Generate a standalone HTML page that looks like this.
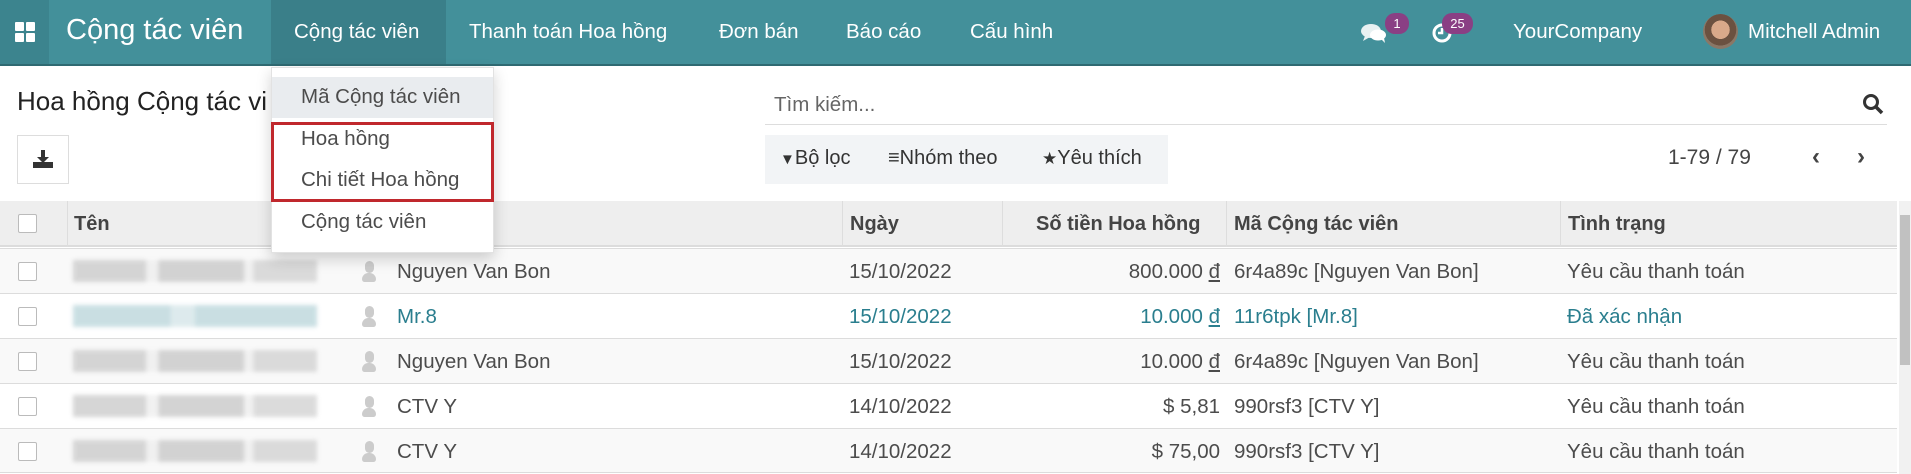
<!DOCTYPE html>
<html><head><meta charset="utf-8"><style>
*{margin:0;padding:0;box-sizing:border-box}
body{width:1911px;height:474px;overflow:hidden;background:#fff;font-family:"Liberation Sans",sans-serif;color:#4c4c4c;position:relative}
.a{position:absolute;white-space:nowrap}
.nav{position:absolute;left:0;top:0;width:1911px;height:66px;background:#43909a;border-bottom:2px solid #2f6a72}
.nv{color:#fff;font-size:20.5px;top:20px}
.badge{position:absolute;background:#8a3f84;color:#fff;font-size:13px;border-radius:10px;text-align:center;height:21px;line-height:21px}
.row{position:absolute;left:0;width:1897px;height:45px;border-top:1px solid #dcdcdc;font-size:20.5px;color:#4c4c4c}
.row span{position:absolute;top:11px;white-space:nowrap}
.cb{position:absolute;left:18px;top:13px;width:19px;height:19px;border:1px solid #bbb;background:#fff;border-radius:2px}
.blur{position:absolute;left:73px;top:11px;width:244px;height:22px;background:linear-gradient(90deg,#ccc 0 30%,#eee 30% 35%,#c9c9c9 35% 70%,#eee 70% 74%,#d3d3d3 74%);filter:blur(2px);opacity:.8}
.av{position:absolute;left:362px;top:12px;width:14px;height:22px}
.av:before{content:"";position:absolute;left:3px;top:0;width:9px;height:12px;border-radius:5px;background:#ccc}
.av:after{content:"";position:absolute;left:0;top:12px;width:14px;height:9px;border-radius:7px 7px 3px 3px;background:#ccc}
.hd{position:absolute;top:213px;font-size:20px;font-weight:bold;color:#444}
.col{position:absolute;top:201px;width:1px;height:46px;background:#ddd}
.teal span{color:#2a7e8e}
.dd{position:absolute;font-size:20.5px;color:#4c4c4c;left:301px}
</style></head><body>
<div class="nav"></div>
<div class="a" style="left:0;top:0;width:49px;height:64px;background:#3c848e"></div>
<div class="a" style="left:15px;top:22px;width:9px;height:9px;background:#fff;border-radius:1px"></div>
<div class="a" style="left:26px;top:22px;width:9px;height:9px;background:#fff;border-radius:1px"></div>
<div class="a" style="left:15px;top:33px;width:9px;height:9px;background:#fff;border-radius:1px"></div>
<div class="a" style="left:26px;top:33px;width:9px;height:9px;background:#fff;border-radius:1px"></div>
<div class="a" style="left:66px;top:14px;color:#fff;font-size:29px">Cộng tác viên</div>
<div class="a" style="left:271px;top:0;width:175px;height:64px;background:#3a7f89"></div>
<div class="a nv" style="left:294px">Cộng tác viên</div>
<div class="a nv" style="left:469px">Thanh toán Hoa hồng</div>
<div class="a nv" style="left:719px">Đơn bán</div>
<div class="a nv" style="left:846px">Báo cáo</div>
<div class="a nv" style="left:970px">Cấu hình</div>
<svg class="a" style="left:1360px;top:22px" width="28" height="22" viewBox="0 0 28 22"><ellipse cx="11" cy="9" rx="10" ry="7" fill="#e8f1f2"/><path d="M5 14 L3 19 L10 15Z" fill="#e8f1f2"/><ellipse cx="18" cy="13" rx="8" ry="5.5" fill="#fff"/><path d="M21 17 L25 21 L24 16Z" fill="#fff"/></svg>
<div class="badge" style="left:1385px;top:13px;width:24px">1</div>
<svg class="a" style="left:1430px;top:20px" width="24" height="24" viewBox="0 0 24 24"><circle cx="12" cy="13" r="8" fill="none" stroke="#fff" stroke-width="3"/><path d="M12 8v5h-4" stroke="#fff" stroke-width="2.5" fill="none"/></svg>
<div class="badge" style="left:1442px;top:13px;width:31px">25</div>
<div class="a nv" style="left:1513px">YourCompany</div>
<div class="a" style="left:1703px;top:14px;width:35px;height:35px;border-radius:50%;background:radial-gradient(circle at 50% 45%,#d9a98a 0 35%,#6b5140 36% 60%,#8a7766 61%)"></div>
<div class="a nv" style="left:1748px">Mitchell Admin</div>

<div class="a" style="left:17px;top:86px;font-size:26px;color:#222">Hoa hồng Cộng tác vi</div>
<div class="a" style="left:17px;top:135px;width:52px;height:49px;border:1px solid #ddd;background:#fff"></div>
<svg class="a" style="left:33px;top:150px" width="20" height="18" viewBox="0 0 20 18"><path d="M8 0h4v7h4l-6 6-6-6h4z" fill="#333"/><rect x="0" y="12" width="20" height="6" fill="#333"/></svg>

<div class="a" style="left:774px;top:93px;font-size:20.5px;color:#666">Tìm kiếm...</div>
<div class="a" style="left:765px;top:124px;width:1122px;height:1px;background:#ddd"></div>
<svg class="a" style="left:1862px;top:93px" width="22" height="22" viewBox="0 0 22 22"><circle cx="9" cy="9" r="6.5" fill="none" stroke="#333" stroke-width="3"/><path d="M14 14l6 6" stroke="#333" stroke-width="3.5"/></svg>
<div class="a" style="left:765px;top:135px;width:403px;height:49px;background:#f2f4f6"></div>
<div class="a" style="left:780px;top:147px;font-size:20px;color:#333"><span style="font-size:15px">▼</span>Bộ lọc</div>
<div class="a" style="left:888px;top:147px;font-size:20px;color:#333">≡Nhóm theo</div>
<div class="a" style="left:1042px;top:147px;font-size:20px;color:#333"><span style="font-size:17px">★</span>Yêu thích</div>
<div class="a" style="left:1668px;top:146px;font-size:21px;color:#444">1-79 / 79</div>
<div class="a" style="left:1812px;top:143px;font-size:24px;color:#444;font-weight:bold">‹</div>
<div class="a" style="left:1857px;top:143px;font-size:24px;color:#444;font-weight:bold">›</div>

<div class="a" style="left:0;top:201px;width:1897px;height:46px;background:#eee;border-bottom:2px solid #dcdcdc"></div>
<div class="cb" style="top:214px"></div>
<div class="col" style="left:67px"></div><div class="col" style="left:842px"></div><div class="col" style="left:1002px"></div><div class="col" style="left:1226px"></div><div class="col" style="left:1560px"></div>
<div class="hd" style="left:74px">Tên</div>
<div class="hd" style="left:850px">Ngày</div>
<div class="hd" style="left:1036px">Số tiền Hoa hồng</div>
<div class="hd" style="left:1234px">Mã Cộng tác viên</div>
<div class="hd" style="left:1568px">Tình trạng</div>
<div class="a" style="left:1899px;top:201px;width:12px;height:273px;background:#f1f1f1"></div>
<div class="a" style="left:1900px;top:215px;width:10px;height:150px;background:#c1c1c1"></div>

<div class="row" style="top:248px;background:#f9f9f9"><div class="cb"></div><div class="blur"></div><div class="av"></div><span style="left:397px">Nguyen Van Bon</span><span style="left:849px">15/10/2022</span><span style="right:677px">800.000 <u>đ</u></span><span style="left:1234px">6r4a89c [Nguyen Van Bon]</span><span style="left:1567px">Yêu cầu thanh toán</span></div>
<div class="row teal" style="top:293px;background:#fff"><div class="cb"></div><div class="blur" style="background:linear-gradient(90deg,#bcd7dc 0 40%,#d5e6e9 40% 50%,#bcd7dc 50%)"></div><div class="av"></div><span style="left:397px">Mr.8</span><span style="left:849px">15/10/2022</span><span style="right:677px">10.000 <u>đ</u></span><span style="left:1234px">11r6tpk [Mr.8]</span><span style="left:1567px">Đã xác nhận</span></div>
<div class="row" style="top:338px;background:#f9f9f9"><div class="cb"></div><div class="blur"></div><div class="av"></div><span style="left:397px">Nguyen Van Bon</span><span style="left:849px">15/10/2022</span><span style="right:677px">10.000 <u>đ</u></span><span style="left:1234px">6r4a89c [Nguyen Van Bon]</span><span style="left:1567px">Yêu cầu thanh toán</span></div>
<div class="row" style="top:383px;background:#fff"><div class="cb"></div><div class="blur"></div><div class="av"></div><span style="left:397px">CTV Y</span><span style="left:849px">14/10/2022</span><span style="right:677px">$ 5,81</span><span style="left:1234px">990rsf3 [CTV Y]</span><span style="left:1567px">Yêu cầu thanh toán</span></div>
<div class="row" style="top:428px;background:#f9f9f9;border-bottom:1px solid #dcdcdc"><div class="cb"></div><div class="blur"></div><div class="av"></div><span style="left:397px">CTV Y</span><span style="left:849px">14/10/2022</span><span style="right:677px">$ 75,00</span><span style="left:1234px">990rsf3 [CTV Y]</span><span style="left:1567px">Yêu cầu thanh toán</span></div>

<div class="a" style="left:271px;top:67px;width:223px;height:186px;background:#fff;border:1px solid #e2e2e2;box-shadow:0 6px 14px rgba(0,0,0,.18)"></div>
<div class="a" style="left:272px;top:77px;width:221px;height:41px;background:#e9ecef"></div>
<div class="dd a" style="top:85px">Mã Cộng tác viên</div>
<div class="a" style="left:271px;top:122px;width:223px;height:80px;border:3px solid #c0282d"></div>
<div class="dd a" style="top:127px">Hoa hồng</div>
<div class="dd a" style="top:168px">Chi tiết Hoa hồng</div>
<div class="dd a" style="top:210px">Cộng tác viên</div>
</body></html>
